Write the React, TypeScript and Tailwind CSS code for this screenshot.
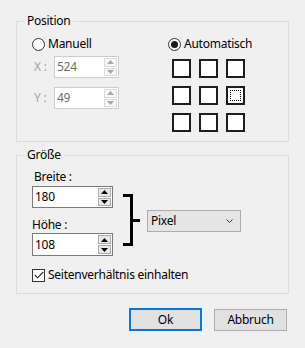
import React from "react";

function Tri({ up, color }: { up: boolean; color: string }) {
  return (
    <svg width="7" height="4" viewBox="0 0 7 4">
      {up ? <polygon points="0,4 7,4 3.5,0" fill={color} /> : <polygon points="0,0 7,0 3.5,4" fill={color} />}
    </svg>
  );
}

function Spin({ disabled }: { disabled?: boolean }) {
  const btn = disabled
    ? "flex-1 flex items-center justify-center bg-[#f7f7f7] border border-[#dcdcdc]"
    : "flex-1 flex items-center justify-center bg-[#e8e8e8] border border-[#adadad]";
  const c = disabled ? "#a8a8a8" : "#000";
  return (
    <div className="flex flex-col gap-[1px] w-[13px] py-[1px] mr-[1px] self-stretch">
      <div className={btn}>
        <Tri up color={c} />
      </div>
      <div className={btn}>
        <Tri up={false} color={c} />
      </div>
    </div>
  );
}

function NumBox({ value, disabled, w, h }: { value: string; disabled?: boolean; w: string; h: string }) {
  return (
    <div
      className={
        "flex items-stretch bg-white border " +
        (disabled ? "border-[#cccccc] text-[#6d6d6d] " : "border-[#7a7a7a] text-black ") +
        w +
        " " +
        h
      }
    >
      <div className="flex-1 flex items-center pl-[2px]">{value}</div>
      <Spin disabled={disabled} />
    </div>
  );
}

function Radio({ checked }: { checked?: boolean }) {
  return (
    <div className="w-[13px] h-[13px] rounded-full border border-[#333333] bg-white flex items-center justify-center shrink-0">
      {checked && <div className="w-[7px] h-[7px] rounded-full bg-[#1a1a1a]" />}
    </div>
  );
}

function Square({ focus }: { focus?: boolean }) {
  return (
    <div className="w-[19px] h-[19px] border-2 border-[#1e1e1e] bg-white flex items-center justify-center">
      {focus && <div className="w-[11px] h-[11px] border border-dotted border-black" />}
    </div>
  );
}

export default function App() {
  return (
    <div className="w-[305px] h-[348px] bg-[#f0f0f0] pt-[13px] px-[16px] font-['Noto_Sans',sans-serif] text-[12px] leading-[16px] tracking-[-0.25px] text-black">
      <fieldset className="border border-[#dcdcdc] h-[129px]">
        <legend className="ml-[7px] px-[3px]">Position</legend>
        <div className="flex pl-[15px] pt-[7px]">
          <div className="w-[136px] flex flex-col">
            <div className="flex items-center gap-[3px] h-[16px]">
              <Radio />
              <span>Manuell</span>
            </div>
            <div className="flex items-center mt-[4px]">
              <span className="w-[22px] pl-[2px] text-[#a3a3a3]">X :</span>
              <NumBox value="524" disabled w="w-[65px]" h="h-[22px]" />
            </div>
            <div className="flex items-center mt-[9px]">
              <span className="w-[22px] pl-[2px] text-[#a3a3a3]">Y :</span>
              <NumBox value="49" disabled w="w-[65px]" h="h-[22px]" />
            </div>
          </div>
          <div className="flex flex-col">
            <div className="flex items-center gap-[3px] h-[16px]">
              <Radio checked />
              <span>Automatisch</span>
            </div>
            <div className="grid grid-cols-[19px_19px_19px] gap-[8px] mt-[7px] pl-[4px]">
              <Square />
              <Square />
              <Square />
              <Square />
              <Square />
              <Square focus />
              <Square />
              <Square />
              <Square />
            </div>
          </div>
        </div>
      </fieldset>

      <fieldset className="border border-[#dcdcdc] h-[147px] mt-[5px]">
        <legend className="ml-[7px] px-[3px]">Größe</legend>
        <div className="pl-[15px]">
          <div className="flex items-start">
            <div className="w-[81px] flex flex-col">
              <span className="mt-[6px] pl-[2px]">Breite :</span>
              <div className="mt-[1px]">
                <NumBox value="180" w="w-[81px]" h="h-[22px]" />
              </div>
              <span className="mt-[9px]">Höhe :</span>
              <NumBox value="108" w="w-[81px]" h="h-[23px]" />
            </div>
            <svg className="ml-[10px] mt-[31px]" width="17" height="52" viewBox="0 0 17 52">
              <path d="M0 1.5 H8.5 V50.5 H0 M8.5 26.5 H17" stroke="#000" strokeWidth="3" fill="none" />
            </svg>
            <div className="ml-[7px] mt-[47px] w-[94px] h-[22px] bg-[#e5e5e5] border border-[#adadad] flex items-center justify-between pl-[3px] pr-[7px]">
              <span>Pixel</span>
              <svg width="7" height="4" viewBox="0 0 7 4">
                <path d="M0.5 0.5 L3.5 3.5 L6.5 0.5" stroke="#333" strokeWidth="1" fill="none" />
              </svg>
            </div>
          </div>
          <div className="flex items-center gap-[3px] mt-[11px] h-[16px]">
            <div className="w-[13px] h-[13px] border border-[#333333] bg-white flex items-center justify-center">
              <svg width="10" height="8" viewBox="0 0 10 8">
                <path d="M0.8 4 L3.6 6.8 L9.2 1" stroke="#222" strokeWidth="1.1" fill="none" />
              </svg>
            </div>
            <span>Seitenverhältnis einhalten</span>
          </div>
        </div>
      </fieldset>

      <div className="flex justify-end gap-[12px] mt-[14px] pr-[2px]">
        <button className="w-[73px] h-[23px] bg-[#e1e1e1] border-2 border-[#0078d7] flex items-center justify-center">
          Ok
        </button>
        <button className="w-[73px] h-[22px] mt-[1px] bg-[#e1e1e1] border border-[#adadad] flex items-center justify-center">
          Abbruch
        </button>
      </div>
    </div>
  );
}
